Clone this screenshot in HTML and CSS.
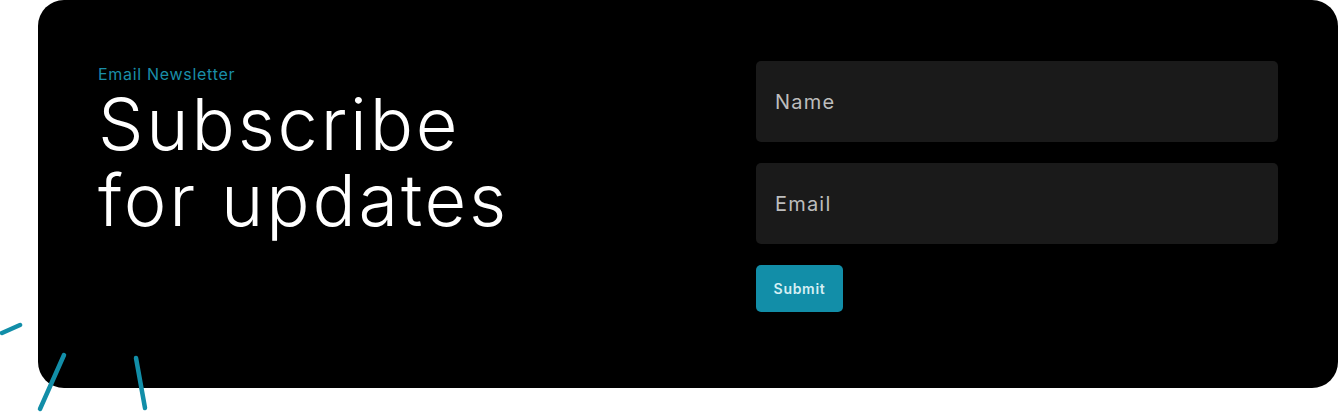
FILE: index.html
```html
<!DOCTYPE html>
<html lang="en">
<head>
<meta charset="utf-8">
<title>Subscribe</title>
<link rel="stylesheet" href="styles.css">
</head>
<body>
<div class="page">
  <svg class="deco" width="160" height="414" viewBox="0 0 160 414" aria-hidden="true">
    <g stroke="#128ea8" stroke-width="4.5" stroke-linecap="round" fill="none">
      <line x1="2" y1="333" x2="20" y2="325"/>
      <line x1="40" y1="409" x2="64" y2="355"/>
      <line x1="136" y1="358" x2="145" y2="408"/>
    </g>
  </svg>
  <section class="card">
    <div class="intro">
      <p class="eyebrow">Email Newsletter</p>
      <h1 class="title"><span class="line">Subscribe</span><span class="line">for updates</span></h1>
    </div>
    <form class="form">
      <div class="field">Name</div>
      <div class="field">Email</div>
      <button class="submit" type="button">Submit</button>
    </form>
  </section>
</div>
</body>
</html>
```
FILE: styles.css
```css
html, body {
  margin: 0;
  padding: 0;
  background: #ffffff;
}
body {
  font-family: "Inter", "DejaVu Sans", sans-serif;
}
.page {
  position: relative;
  width: 1338px;
  height: 414px;
}
.deco {
  position: absolute;
  left: 0;
  top: 0;
  z-index: 2;
}
.card {
  margin-left: 38px;
  width: 1300px;
  height: 388px;
  box-sizing: border-box;
  background: #000000;
  border-radius: 26px;
  padding: 61px 60px 0 60px;
  display: grid;
  grid-template-columns: 1fr 522px;
  column-gap: 40px;
}
.intro {
  padding-top: 3px;
}
.eyebrow {
  margin: 0 0 2px 0;
  color: #1a8ea8;
  font-size: 16px;
  line-height: 20px;
  font-weight: 400;
  letter-spacing: 0.7px;
}
.title {
  margin: 0;
  color: #ffffff;
  font-weight: 300;
  font-size: 72px;
  line-height: 76px;
  letter-spacing: 2.8px;
}
.line {
  display: block;
}
.form {
  display: flex;
  flex-direction: column;
  align-items: flex-start;
  gap: 21px;
}
.field {
  box-sizing: border-box;
  width: 522px;
  height: 81px;
  background: #1a1a1a;
  border-radius: 5px;
  padding: 0 19px;
  display: flex;
  align-items: center;
  color: #bdbdbd;
  font-size: 20px;
  letter-spacing: 1.2px;
}
.submit {
  width: 87px;
  height: 47px;
  border: 0;
  border-radius: 5px;
  background: #128ea8;
  color: #d6eff4;
  font-family: inherit;
  font-size: 14px;
  font-weight: 600;
  letter-spacing: 0.7px;
  padding: 0;
}
```
